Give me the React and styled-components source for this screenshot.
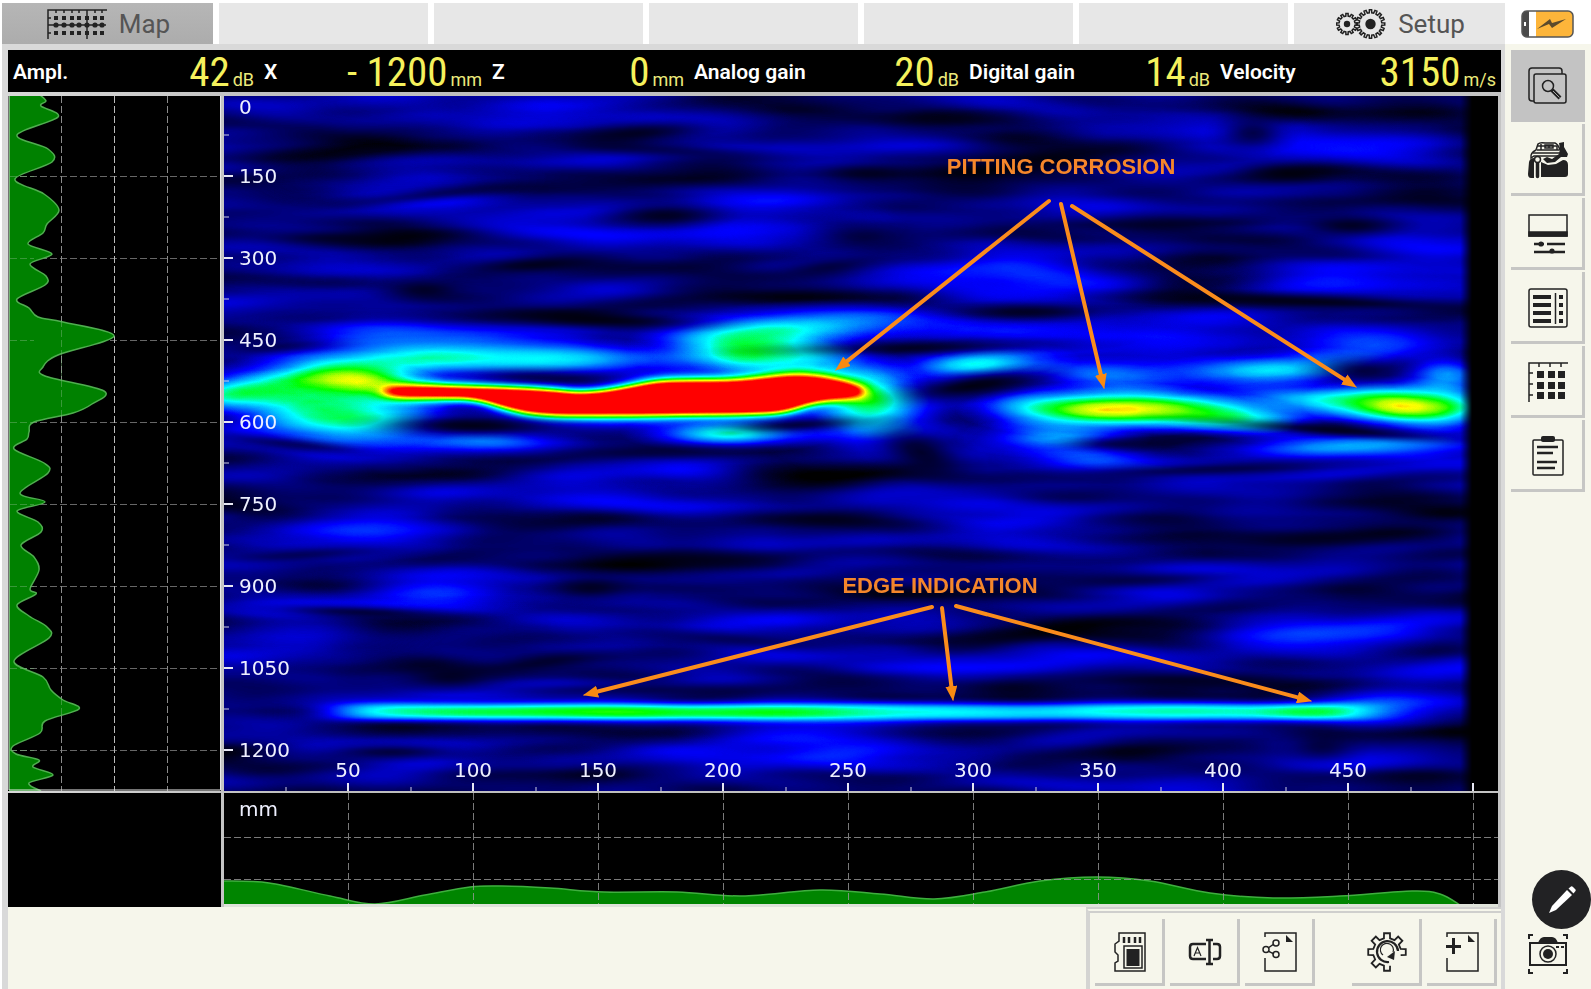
import React from "react";
import styled, { createGlobalStyle } from "styled-components";

const INK = "#222";
const CREAM = "#f6f6eb";
const EDGE = "#c6c6c4";

const GlobalStyle = createGlobalStyle`
  * { box-sizing: border-box; }
  body { margin: 0; background: ${CREAM}; font-family: Roboto, "Liberation Sans", sans-serif; }
  button { font: inherit; color: inherit; padding: 0; margin: 0; border: 0; background: none; cursor: pointer; }
  svg { display: block; }
`;

const Page = styled.div`
  display: grid;
  grid-template-columns: 1fr 86px;
  min-height: 100vh;
`;

const Main = styled.main`
  display: flex;
  flex-direction: column;
  min-width: 0;
  background: #fff;
`;

const Tabs = styled.nav`
  display: flex;
  gap: 6px;
  height: 44px;
  padding: 3px 0 0 2px;
`;

const tabBox = `
  flex: 1 1 0;
  display: flex;
  align-items: center;
  justify-content: center;
  gap: 12px;
  background: #e7e7e7;
`;

const EmptyTab = styled.div`
  ${tabBox}
`;

const Tab = styled.button`
  ${tabBox}
  color: #555;
  font-size: 26px;
  line-height: 32px;
  && {
    padding-left: 2px;
    background: ${(p) => (p.$active ? "linear-gradient(#b6b6b6, #acacac)" : "#e7e7e7")};
  }
`;

const Frame = styled.div`
  flex: 1;
  display: flex;
  flex-direction: column;
  margin-left: 2px;
  padding: 6px 4px 0 6px;
  background: #d9d9d9;
`;

const Readouts = styled.dl`
  display: grid;
  grid-template-columns: 251fr 228fr 202fr 275fr 251fr 286fr;
  height: 42px;
  margin: 0;
  background: #000;
`;

const Readout = styled.div`
  display: flex;
  align-items: center;
  justify-content: space-between;
  padding: 0 5px;
`;

const ReadoutLabel = styled.dt`
  color: #fff;
  font-size: 21px;
  line-height: 24px;
  font-weight: 600;
`;

const ReadoutValue = styled.dd`
  display: flex;
  align-items: baseline;
  gap: 3px;
  margin: 0;
  color: #f5f15c;
  font-family: "Roboto Condensed", Roboto, sans-serif;
  font-size: 41px;
  line-height: 44px;
  white-space: pre;
`;

const Unit = styled.span`
  color: #ecea7c;
  font-family: Roboto, sans-serif;
  font-size: 18px;
  line-height: 20px;
`;

const Scans = styled.section`
  display: grid;
  grid-template-columns: 213fr 1274fr;
  column-gap: 3px;
  row-gap: 2px;
  padding: 4px 3px 0 0;
  background: linear-gradient(90deg, #d8d8d8, #bdbdbd 20%, #c4c4c4);
`;

const Plot = styled.svg`
  width: 100%;
  height: auto;
  background: #000;
`;

const Blank = styled.div`
  background: #000;
`;

const Strip = styled.div`
  border-bottom: 3px solid #dfe3da;
`;

const AxisText = styled.text`
  fill: #eef0ff;
  font-family: "DejaVu Sans", sans-serif;
  font-size: 20px;
`;

const NoteText = styled.text`
  fill: #f5862b;
  font-family: "Liberation Sans", Arial, sans-serif;
  font-size: 22px;
  font-weight: 700;
`;

const Footer = styled.footer`
  flex: 1;
  display: flex;
  justify-content: flex-end;
  background: ${CREAM};
`;

const Toolbar = styled.div`
  display: flex;
  align-items: flex-start;
  gap: 5px;
  padding: 6px 4px 4px 5px;
  border-left: 4px solid #d4d4d2;
  border-top: 6px double #cfcfcd;
`;

const ToolGroup = styled.div`
  display: flex;
  gap: 5px;
  margin-left: ${(p) => (p.$apart ? "32px" : "0")};
`;

const ToolButton = styled.button`
  display: grid;
  place-items: center;
  width: 70px;
  height: 67px;
  border-right: 3px solid ${EDGE};
  border-bottom: 3px solid ${EDGE};
  && { padding: 2px 0 0 2px; }
`;

const Side = styled.aside`
  display: flex;
  flex-direction: column;
  background: ${CREAM};
`;

const BatteryBox = styled.div`
  height: 44px;
  padding: 10px 0 0 16px;
  background: #fff;
`;

const SideNav = styled.nav`
  display: flex;
  flex-direction: column;
  gap: 2px;
  padding: 6px 6px 0;
`;

const SideButton = styled.button`
  display: grid;
  place-items: center;
  height: 72px;
  border-right: 3px solid ${EDGE};
  border-bottom: 3px solid ${EDGE};
  && { padding: 3px 0 0 3px; }
  ${(p) => p.$active && "&& { background: #c3c3c3; border-color: #c3c3c3; }"}
`;

const SideFoot = styled.div`
  display: flex;
  flex-direction: column;
  align-items: flex-end;
  gap: 5px;
  margin-top: auto;
  padding-bottom: 16px;
`;

const PenButton = styled.button`
  && { background: #222224; }
  display: grid;
  place-items: center;
  width: 59px;
  height: 59px;
  border-radius: 50%;
`;

const CameraButton = styled.button`
  margin-right: 23px;
`;

/* ---------- curves and helpers ---------- */

function smooth(points) {
  let d = `M${points[0][0]} ${points[0][1]}`;
  for (let i = 0; i < points.length - 1; i++) {
    const a = points[Math.max(0, i - 1)];
    const b = points[i];
    const c = points[i + 1];
    const e = points[Math.min(points.length - 1, i + 2)];
    d += `C${b[0] + (c[0] - a[0]) / 6} ${b[1] + (c[1] - a[1]) / 6} ${c[0] - (e[0] - b[0]) / 6} ${c[1] - (e[1] - b[1]) / 6} ${c[0]} ${c[1]}`;
  }
  return d;
}

function gear(cx, cy, outer, inner, teeth, from = 0, to = teeth) {
  const step = (Math.PI * 2) / teeth;
  const pts = [];
  for (let i = from; i < to; i++) {
    [[-0.28, inner], [-0.2, outer], [0.2, outer], [0.28, inner]].forEach(([f, r]) => {
      const t = (i + f) * step;
      pts.push(`${(cx + r * Math.cos(t)).toFixed(2)} ${(cy + r * Math.sin(t)).toFixed(2)}`);
    });
  }
  return `M${pts.join("L")}${to - from === teeth ? "Z" : ""}`;
}

const DEPTHS = [150, 300, 450, 600, 750, 900, 1050, 1200].map((label, i) => ({ label, y: 176 + i * 82 }));
const POSITIONS = [50, 100, 150, 200, 250, 300, 350, 400, 450].map((label, i) => ({ label, x: 348 + i * 125 }));

/* ---------- amplitude profile along depth ---------- */

const PROFILE = [
  [40, 95], [46, 101], [41, 106], [58, 117], [17, 135], [48, 149], [52, 162], [15, 179], [44, 194], [59, 210],
  [47, 224], [43, 233], [28, 244], [52, 254], [30, 264], [46, 276], [45, 285], [17, 299], [29, 308], [38, 317],
  [63, 322], [114, 336], [58, 355], [43, 367], [45, 376], [104, 391], [92, 404], [73, 413], [34, 422],
  [29, 432], [27, 439], [14, 449], [44, 463], [48, 473], [20, 493], [45, 502], [17, 511], [38, 522], [41, 532],
  [21, 545], [34, 557], [39, 570], [30, 589], [36, 594], [17, 605], [29, 616], [47, 627], [49, 638], [14, 661],
  [43, 677], [51, 690], [63, 700], [79, 709], [45, 721], [40, 733], [13, 746], [16, 754], [39, 760], [33, 767],
  [53, 775], [29, 783], [41, 791],
];

function DepthProfile() {
  const line = smooth(PROFILE);
  return (
    <Plot viewBox="8 96 213 695" role="img" aria-label="Amplitude along depth">
      <g stroke="#8a8a8a" strokeWidth="1" strokeDasharray="7 3">
        {DEPTHS.map((d) => (
          <path key={d.label} d={`M10 ${d.y}.5H219`} opacity=".75" />
        ))}
        <path d="M61.500 96V791M167.500 96V791" />
        <path d="M114.500 96V791" stroke="#bbb" />
      </g>
      <path d={`${line}L9 791L9 95Z`} fill="#008100" />
      <path d={line} fill="none" stroke="#4fae4f" strokeWidth="1.500" />
      <g stroke="#7db87d" strokeWidth="1" strokeDasharray="7 3" opacity=".45">
        {DEPTHS.map((d) => (
          <path key={d.label} d={`M10 ${d.y}.5H34`} />
        ))}
        <path d="M61.500 320V420M61.500 698V716" />
      </g>
      <path d="M9 96V790H220.500V96" fill="none" stroke="#e9e9e9" strokeWidth="1" />
    </Plot>
  );
}

/* ---------- tomogram ---------- */

/* cx, cy, rx, ry, strength, tilt */
const ECHOES = [
  [300, 386, 150, 34, 0.38, -4], [230, 394, 90, 22, 0.38, -6], [325, 376, 120, 28, 0.28, 0], [375, 386, 90, 26, 0.5, 8],
  [345, 379, 90, 22, 0.1, 0], [425, 358, 240, 28, 0.48, -1], [325, 410, 130, 42, 0.42, 4], [370, 420, 120, 36, 0.26, 0], [570, 360, 170, 22, 0.26, 0],
  [735, 352, 110, 40, 0.38, 4], [745, 358, 60, 22, 0.14, 0], [765, 336, 170, 34, 0.28, -4], [840, 326, 150, 28, 0.22, 0],
  [812, 366, 110, 48, 0.34, 14], [730, 433, 110, 21, 0.46, 0], [480, 441, 120, 20, 0.22, 2], [580, 422, 160, 18, 0.14, 0],
  [868, 394, 64, 44, 0.42, 0], [880, 422, 120, 50, 0.28, -8], [972, 364, 110, 23, 0.44, -3],
  [1105, 410, 150, 29, 0.7, 0], [1180, 411, 130, 26, 0.4, 4], [1245, 419, 100, 24, 0.34, 6], [1030, 407, 90, 30, 0.22, -4],
  [1400, 406, 100, 30, 0.66, 3], [1320, 401, 140, 24, 0.4, 2], [1446, 408, 70, 32, 0.34, 0],
  [1265, 371, 140, 23, 0.38, -3], [1110, 377, 120, 22, 0.28, 0], [1448, 374, 60, 30, 0.34, 0], [1375, 345, 150, 40, 0.22, -8],
  [1053, 438, 100, 21, 0.34, 0], [1345, 445, 190, 22, 0.36, -3], [1090, 459, 100, 20, 0.2, 0],
  [425, 591, 150, 32, 0.2, 0], [350, 535, 140, 28, 0.16, 0], [360, 332, 150, 24, 0.2, 0], [1310, 283, 150, 28, 0.17, 0],
  [1010, 332, 220, 28, 0.18, 2], [1300, 640, 140, 36, 0.17, 0], [1400, 147, 140, 44, 0.12, 0], [400, 178, 150, 40, 0.12, 0],
  [760, 226, 150, 34, 0.12, 0], [840, 740, 180, 34, 0.12, 6], [1060, 284, 220, 46, 0.12, 2], [370, 458, 140, 26, 0.16, 2],
  [700, 470, 100, 24, 0.1, 0], [1380, 706, 130, 28, 0.2, 0], [290, 630, 160, 40, 0.12, 0], [540, 110, 260, 30, 0.1, 2],
  [1100, 350, 300, 60, 0.08, 0], [900, 620, 160, 24, 0.08, 0], [1030, 540, 180, 24, 0.08, 3], [600, 500, 200, 24, 0.08, 3],
  [1120, 120, 200, 26, 0.08, 0], [560, 620, 200, 26, 0.08, 4], [500, 740, 220, 24, 0.08, 0], [340, 270, 150, 26, 0.08, -2],
];

const SHADOWS = [
  [639, 133, 90, 14, 0.7, -4], [532, 265, 110, 14, 0.8, -3], [664, 215, 80, 16, 0.7, 0], [863, 173, 70, 14, 0.6, 0],
  [1253, 133, 50, 24, 0.7, 0], [1286, 173, 70, 14, 0.7, 0], [1352, 226, 70, 14, 0.7, 0], [863, 237, 70, 18, 0.6, 0],
  [830, 267, 80, 14, 0.6, -6], [424, 290, 60, 16, 0.7, 0], [473, 426, 140, 15, 0.85, 1], [971, 386, 110, 18, 0.9, -8],
  [921, 452, 70, 34, 0.8, 20], [1362, 371, 70, 20, 0.75, 0], [530, 376, 100, 12, 0.55, 0], [797, 425, 110, 11, 0.75, -3],
  [1112, 444, 70, 10, 0.6, 0], [1320, 302, 280, 11, 0.8, 2], [598, 320, 160, 12, 0.8, 2], [910, 348, 220, 11, 0.7, -1],
  [591, 588, 60, 18, 0.7, 0], [449, 677, 70, 18, 0.7, 0], [391, 752, 100, 12, 0.7, 0], [1322, 747, 50, 24, 0.6, 0],
  [538, 663, 90, 12, 0.6, -6], [1330, 430, 200, 10, 0.8, 4], [1200, 470, 240, 12, 0.7, -2], [650, 453, 180, 12, 0.6, 0],
  [280, 347, 90, 10, 0.5, -3], [330, 238, 130, 14, 0.7, 0], [430, 195, 150, 10, 0.5, -6],
  [300, 555, 140, 12, 0.6, -3], [1000, 640, 100, 14, 0.5, -8], [360, 612, 140, 10, 0.7, 2], [1030, 312, 120, 12, 0.7, 0],
  [300, 445, 110, 10, 0.6, 6], [700, 560, 160, 14, 0.5, 2], [1150, 580, 180, 12, 0.5, -3], [840, 520, 160, 12, 0.5, 3],
  [1300, 540, 160, 14, 0.5, 0], [740, 640, 150, 12, 0.5, 4], [1160, 680, 170, 12, 0.6, 0], [660, 150, 180, 10, 0.4, 3],
  [1060, 160, 170, 12, 0.5, 3], [960, 120, 120, 12, 0.5, 0], [1120, 225, 150, 10, 0.5, 0], [620, 690, 200, 10, 0.5, 0],
];

const ARROWS = [
  [1049, 201, 836, 370], [1061, 204, 1104, 388], [1072, 206, 1356, 387],
  [932, 607, 584, 695], [942, 608, 953, 700], [956, 606, 1311, 701],
];

const CORE =
  "M384 391C400 387 440 387 467 388S540 390 565 393S615 391 639 386S680 382 720 382S775 376 800 377S850 384 861 390S830 396 813 401S790 411 764 412S640 414 581 414S510 408 500 405S480 397 460 397S390 396 384 391Z";

const spots = (list, fill) =>
  list.map(([cx, cy, rx, ry, o, tilt], i) => (
    <ellipse key={i} cx={cx} cy={cy} rx={rx} ry={ry} fill={fill} opacity={o} transform={`rotate(${tilt} ${cx} ${cy})`} />
  ));

function Tomogram() {
  return (
    <Plot viewBox="224 96 1274 695" role="img" aria-label="Depth map">
      <defs>
        {[["echo", "#fff"], ["shade", "#000"]].map(([id, c]) => (
          <radialGradient id={id} key={id}>
            <stop offset="0" stopColor={c} />
            <stop offset=".2" stopColor={c} stopOpacity=".88" />
            <stop offset=".4" stopColor={c} stopOpacity=".61" />
            <stop offset=".6" stopColor={c} stopOpacity=".32" />
            <stop offset=".8" stopColor={c} stopOpacity=".12" />
            <stop offset="1" stopColor={c} stopOpacity="0" />
          </radialGradient>
        ))}
        <linearGradient id="fade" gradientUnits="userSpaceOnUse" x1="1460" x2="1472" y1="0" y2="0">
          <stop offset="0" stopOpacity="0" />
          <stop offset="1" stopOpacity="1" />
        </linearGradient>
        <marker id="head" viewBox="0 0 15 12" refX="14" refY="6" markerWidth="15" markerHeight="12" markerUnits="userSpaceOnUse" orient="auto">
          <path d="M0 0L15 6L0 12Z" fill="#f98a12" />
        </marker>
        <filter id="soft" filterUnits="userSpaceOnUse" x="200" y="300" width="900" height="200">
          <feGaussianBlur stdDeviation="7 4" />
        </filter>
        <filter id="halo" filterUnits="userSpaceOnUse" x="200" y="300" width="900" height="200">
          <feGaussianBlur stdDeviation="16 7" />
        </filter>
        <filter id="line" filterUnits="userSpaceOnUse" x="200" y="660" width="1300" height="100">
          <feGaussianBlur stdDeviation="30 3" />
        </filter>
        <filter id="jet" filterUnits="userSpaceOnUse" x="224" y="96" width="1274" height="695" colorInterpolationFilters="sRGB">
          <feTurbulence type="fractalNoise" baseFrequency=".0045 .031" numOctaves="2" seed="11" />
          <feColorMatrix values="0 0 0 .4 -.08  0 0 0 .4 -.08  0 0 0 .4 -.08  0 0 0 0 1" result="noise" />
          <feBlend in="SourceGraphic" in2="noise" mode="screen" />
          <feComponentTransfer>
            <feFuncR type="table" tableValues="0 0 0 0 0 0 1 1 1" />
            <feFuncG type="table" tableValues="0 0 0 .5 1 1 1 0 0" />
            <feFuncB type="table" tableValues="0 .5 1 1 1 0 0 0 0" />
          </feComponentTransfer>
        </filter>
      </defs>

      <g filter="url(#jet)">
        <rect x="224" y="96" width="1274" height="695" />
        {spots(ECHOES, "url(#echo)")}
        <path filter="url(#halo)" fill="#fff" stroke="#fff" strokeWidth="4" opacity=".42" d={CORE} />
        <path filter="url(#soft)" fill="#fff" stroke="#fff" strokeWidth="5" strokeLinejoin="round" d={CORE} />
        <g filter="url(#line)" fill="#fff">
          <rect x="335" y="704" width="1030" height="16" opacity=".46" />
          <rect x="430" y="706" width="400" height="12" opacity=".2" />
          <rect x="1270" y="706" width="70" height="12" opacity=".2" />
        </g>
      </g>
      {spots(SHADOWS, "url(#shade)")}
      <rect x="1460" y="96" width="40" height="695" fill="url(#fade)" />

      <g stroke="#e8e8f4" strokeWidth="2">
        {DEPTHS.map((d) => (
          <path key={d.label} d={`M224 ${d.y}h9`} />
        ))}
        {POSITIONS.map((p) => (
          <path key={p.label} d={`M${p.x} 791v-8`} />
        ))}
        <path d="M1473 791v-8" />
      </g>
      <g stroke="#d0d0e4" strokeWidth="1">
        {DEPTHS.map((d) => (
          <path key={d.label} d={`M224 ${d.y - 41}h5`} />
        ))}
        {POSITIONS.map((p) => (
          <path key={p.label} d={`M${p.x - 62} 791v-4`} />
        ))}
        <path d="M1411 791v-4" />
      </g>
      <AxisText x="239" y="114">0</AxisText>
      {DEPTHS.map((d) => (
        <AxisText key={d.label} x="239" y={d.y + 7}>{d.label}</AxisText>
      ))}
      {POSITIONS.map((p) => (
        <AxisText key={p.label} x={p.x} y="777" textAnchor="middle">{p.label}</AxisText>
      ))}

      <g stroke="#fb8c1c" strokeWidth="4" strokeLinecap="round">
        {ARROWS.map(([x1, y1, x2, y2]) => {
          const len = Math.hypot(x2 - x1, y2 - y1);
          const ex = x2 - ((x2 - x1) / len) * 9;
          const ey = y2 - ((y2 - y1) / len) * 9;
          return (
            <g key={x2}>
              <line x1={x1} y1={y1} x2={ex} y2={ey} />
              <line x1={x1} y1={y1} x2={x2} y2={y2} strokeWidth="1" markerEnd="url(#head)" />
            </g>
          );
        })}
      </g>
      <NoteText x="1061" y="174" textAnchor="middle">PITTING CORROSION</NoteText>
      <NoteText x="940" y="593" textAnchor="middle">EDGE INDICATION</NoteText>
    </Plot>
  );
}

/* ---------- amplitude strip along position ---------- */

const WAVE = [
  [224, 881], [269, 883], [330, 896], [375, 904], [425, 895], [470, 887], [502, 886], [550, 888], [604, 892], [677, 892],
  [742, 896], [820, 890], [880, 894], [934, 899], [985, 892], [1040, 881], [1097, 877], [1150, 881], [1210, 893],
  [1273, 898], [1340, 896], [1412, 891], [1440, 894], [1460, 905],
];

function PositionProfile() {
  const line = smooth(WAVE);
  return (
    <Plot viewBox="224 793 1274 111" role="img" aria-label="Amplitude along position">
      <path d={`${line}L224 905Z`} fill="#008500" />
      <path d={line} fill="none" stroke="#3fae3f" strokeWidth="1.500" />
      <g stroke="#999" strokeWidth="1" strokeDasharray="7 3" opacity=".8">
        {POSITIONS.map((p) => (
          <path key={p.label} d={`M${p.x}.5 793V904`} />
        ))}
        <path d="M1473.500 793V904M224 837.500H1498M224 879.500H1498" />
      </g>
      <AxisText x="239" y="816">mm</AxisText>
    </Plot>
  );
}

/* ---------- icons ---------- */

const Icon = ({ w = 40, h = 40, children }) => (
  <svg width={w} height={h} viewBox={`0 0 ${w} ${h}`} fill="none" stroke={INK} strokeWidth="1.500" aria-hidden="true">
    {children}
  </svg>
);

const MapIcon = () => (
  <Icon w={60} h={30}>
    <path d="M1 30V1H60M1 16H59M40 1V30" />
    <path d="M9 1v3M17 1v3M25 1v3M32 1v3M48 1v3M55 1v3M1 9h3M1 24h3" />
    <g fill={INK} stroke="none">
      {[9, 17, 25, 32, 40, 48, 55].map((x) => (
        <g key={x}>
          <rect x={x - 2} y="7" width="4" height="4" />
          <circle cx={x} cy="16" r="2.600" />
          <rect x={x - 2} y="22" width="4" height="4" />
        </g>
      ))}
    </g>
  </Icon>
);

const GearsIcon = () => (
  <Icon w={50} h={30}>
    <path d={gear(11, 15, 10.5, 8, 12)} />
    <circle cx="11" cy="15" r="3.200" fill={INK} stroke="none" />
    <path d={gear(34.5, 15, 14.3, 11.3, 16)} />
    <circle cx="34.500" cy="15" r="5.200" fill={INK} stroke="none" />
  </Icon>
);

const BatteryIcon = () => (
  <svg width="53" height="28" viewBox="0 0 53 28" role="img" aria-label="Battery charging">
    <rect x="1" y="1" width="51" height="26" rx="5" fill="#fff" />
    <path d="M15 1H47Q52 1 52 6V22Q52 27 47 27H15Z" fill="#fdb53a" />
    <path d="M8 1H6Q1 1 1 6V22Q1 27 6 27H8Z" fill="#4a4a4a" />
    <rect x="3" y="12" width="2" height="4" fill="#fff" />
    <rect x="1" y="1" width="51" height="26" rx="5" fill="none" stroke="#555" strokeWidth="1.500" />
    <path d="M16 19L29 9L31 13L45 9L31 18L28 14Z" fill="#5b4a2c" />
  </svg>
);

const ViewIcon = () => (
  <Icon>
    <path d="M6 35H4Q1 35 1 32V5Q1 2 4 2H31Q34 2 34 5V8" />
    <rect x="6" y="8" width="32" height="29" rx="2" />
    <circle cx="20" cy="20" r="5.500" />
    <path d="M24 24L32 32" strokeWidth="4" />
    <path d="M25 25L31.500 31.500" stroke="#aaa" strokeWidth="1" />
  </Icon>
);

const DeviceIcon = () => (
  <Icon>
    <path d="M3 18Q2 13 8 10L10 4Q12 2 17 3H27Q30 4 32 10Q35 14 31 16H6Z" fill="#f6f6eb" />
    <path d="M9 10H31M10 6H29V10M13 4v6M17 5h8v3h-8ZM21 5v3M5 13H32" />
    <path d="M31 3L36 2L36 7L40 14L39 17L33 17L27 22L19 23L15 19L19 17L24 19L31 14L32 9Z" fill={INK} stroke="none" />
    <path d="M1 22Q2 18 6 18V38H3Q0 38 0 34ZM13 22L20 25L28 24L35 20Q40 20 40 25V34Q40 37 37 37H13Z" fill={INK} stroke="none" />
    <rect x="7" y="19" width="5" height="20" rx="2.500" fill={INK} stroke="#f6f6eb" />
    <circle cx="9.500" cy="19.500" r="3" fill="#f6f6eb" />
  </Icon>
);

const DisplayIcon = () => (
  <Icon>
    <rect x="1" y="1" width="38" height="21" />
    <rect x="1" y="18" width="38" height="4" fill={INK} />
    <path d="M6 30H16M19 30H37M6 38H19M28 38H37M19 38H28" strokeWidth="2.500" />
    <circle cx="13" cy="30" r="2.600" fill={INK} stroke="none" />
    <circle cx="24" cy="37" r="2.600" fill={INK} stroke="none" />
  </Icon>
);

const ListIcon = () => (
  <Icon>
    <rect x="1" y="1" width="38" height="38" rx="2" />
    <path d="M27.500 5V36" />
    <g fill={INK} stroke="none">
      {[7, 15, 23, 31].map((y) => (
        <g key={y}>
          <rect x="5" y={y} width="18" height="4" />
          <rect x="31" y={y} width="4" height="4" />
        </g>
      ))}
    </g>
  </Icon>
);

const GridIcon = () => (
  <Icon>
    <path d="M1 40V1H40M1 11h4M1 22h4M1 33h4M11 1v4M22 1v4M33 1v4" />
    <g fill={INK} stroke="none">
      {[9, 20, 30].map((x) => [9, 20, 30].map((y) => <rect key={`${x}-${y}`} x={x} y={y} width="7" height="7" />))}
    </g>
  </Icon>
);

const ClipboardIcon = () => (
  <Icon>
    <rect x="5" y="4" width="30" height="35" rx="1" />
    <rect x="13" y="0" width="14" height="6" rx="2" fill={INK} stroke="none" />
    <path d="M9 11H30M9 17H25M9 26H29M9 32H27" strokeWidth="2.500" />
  </Icon>
);

const CardIcon = () => (
  <Icon>
    <path d="M9 1H35V39H5V31L8 29V23L5 20V12L9 9Z" />
    <path d="M14 5V11M19 5V11M25 5V11M30 5V11" strokeWidth="2.500" />
    <rect x="14" y="14" width="18" height="22" />
    <rect x="16.500" y="17" width="13" height="17" fill={INK} stroke="none" />
  </Icon>
);

const RenameIcon = () => (
  <Icon>
    <path d="M21 12H8Q5 12 5 15V24Q5 27 8 27H21M28 12H32Q35 12 35 15V24Q35 27 32 27H28" strokeWidth="2.500" />
    <path d="M24.500 8V32M21 8H28M21 32H28" strokeWidth="2.500" />
    <path d="M9 24L12.500 15.500L16 24M10.200 21H14.800" strokeWidth="1.200" />
  </Icon>
);

const ShareIcon = () => (
  <Icon>
    <path d="M5 5V1H36V39H5V26" />
    <path d="M26 3V10H33Z" fill={INK} stroke="none" />
    <path d="M8 16L14 12M8 19L14 22" />
    <circle cx="6" cy="17.500" r="3" />
    <circle cx="16" cy="11" r="3" />
    <circle cx="16" cy="22.500" r="3" />
  </Icon>
);

const ResetIcon = () => (
  <Icon>
    <path d={gear(20, 20, 19, 14, 8, 2, 9)} strokeWidth="1.800" />
    <path d="M22 30A10.500 10.500 0 1 1 31 19" strokeWidth="2.200" />
    <path d="M16 23A6.500 6.500 0 1 1 26 20" strokeWidth="1.200" />
    <path d="M28 19L27 28L20 25Z" fill={INK} stroke="none" />
  </Icon>
);

const NewIcon = () => (
  <Icon>
    <path d="M5 5V1H36V39H5V26" />
    <path d="M26 3V10H33Z" fill={INK} stroke="none" />
    <path d="M11.500 6V22M4 14.500H19" strokeWidth="3" />
  </Icon>
);

const CameraIcon = () => (
  <Icon>
    <path d="M1 5V1H5M35 1H39V5M1 35V39H5M35 39H39V35" strokeWidth="2" />
    <rect x="2" y="9" width="36" height="22" strokeWidth="2" />
    <path d="M10 9Q12 3 16 3H24Q28 3 30 9Z" fill={INK} stroke="none" />
    <circle cx="20" cy="20" r="8" />
    <circle cx="20" cy="20" r="5" fill={INK} stroke="none" />
    <path d="M28 13h3M33 13h3" strokeWidth="2" />
  </Icon>
);

const PenIcon = () => (
  <svg width="32" height="32" viewBox="0 0 32 32" fill="#fff" aria-hidden="true">
    <path d="M3 29L6 22L21 6L26 11L10 26Z" />
    <path d="M22.500 4.500L25 2.500Q26 2 27 3L29.500 5.500Q30 6 29.500 7L27.500 9.500Z" />
  </svg>
);

/* ---------- screen ---------- */

const READOUTS = [
  ["Ampl.", "42", "dB"],
  ["X", "- 1200", "mm"],
  ["Z", "0", "mm"],
  ["Analog gain", "20", "dB"],
  ["Digital gain", "14", "dB"],
  ["Velocity", "3150", "m/s"],
];

const SIDE = [
  ["View", ViewIcon],
  ["Scanner", DeviceIcon],
  ["Display settings", DisplayIcon],
  ["List", ListIcon],
  ["Grid", GridIcon],
  ["Report", ClipboardIcon],
];

const FILE_TOOLS = [["Memory card", CardIcon], ["Rename", RenameIcon], ["Share", ShareIcon]];
const SCAN_TOOLS = [["Reset", ResetIcon], ["New", NewIcon]];

const toolButtons = (list) =>
  list.map(([name, Glyph]) => (
    <ToolButton key={name} type="button" aria-label={name}>
      <Glyph />
    </ToolButton>
  ));

export default function App() {
  return (
    <Page>
      <GlobalStyle />
      <Main>
        <Tabs>
          <Tab type="button" $active>
            <MapIcon />
            Map
          </Tab>
          {[1, 2, 3, 4, 5].map((n) => (
            <EmptyTab key={n} />
          ))}
          <Tab type="button">
            <GearsIcon />
            Setup
          </Tab>
        </Tabs>
        <Frame>
          <Readouts>
            {READOUTS.map(([label, value, unit]) => (
              <Readout key={label}>
                <ReadoutLabel>{label}</ReadoutLabel>
                <ReadoutValue>
                  {value}
                  <Unit>{unit}</Unit>
                </ReadoutValue>
              </Readout>
            ))}
          </Readouts>
          <Scans>
            <DepthProfile />
            <Tomogram />
            <Blank />
            <Strip>
              <PositionProfile />
            </Strip>
          </Scans>
          <Footer>
            <Toolbar>
              <ToolGroup>{toolButtons(FILE_TOOLS)}</ToolGroup>
              <ToolGroup $apart>{toolButtons(SCAN_TOOLS)}</ToolGroup>
            </Toolbar>
          </Footer>
        </Frame>
      </Main>
      <Side>
        <BatteryBox>
          <BatteryIcon />
        </BatteryBox>
        <SideNav>
          {SIDE.map(([name, Glyph], i) => (
            <SideButton key={name} type="button" aria-label={name} $active={i === 0}>
              <Glyph />
            </SideButton>
          ))}
        </SideNav>
        <SideFoot>
          <PenButton type="button" aria-label="Annotate">
            <PenIcon />
          </PenButton>
          <CameraButton type="button" aria-label="Take screenshot">
            <CameraIcon />
          </CameraButton>
        </SideFoot>
      </Side>
    </Page>
  );
}
